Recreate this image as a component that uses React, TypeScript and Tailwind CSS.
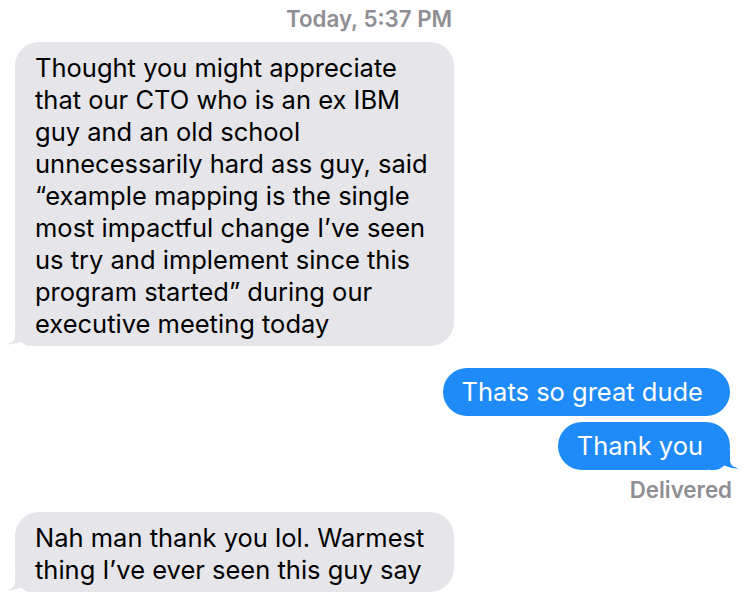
const font = { fontFamily: 'Inter, "Liberation Sans", sans-serif' };

const LeftTail = () => (
  <svg className="absolute -left-[10px] bottom-0" width="30" height="20" viewBox="0 0 30 20">
    <path d="M10 0 L10 10 C10 14 8 17 1 18.5 C6 18.8 10 17.6 16 15.5 C19 18.5 22 20 26 20 L30 20 L30 0 Z" fill="#e5e5ea" />
  </svg>
);

const RightTail = () => (
  <svg className="absolute -right-[10px] bottom-0" width="30" height="20" viewBox="0 0 30 20">
    <path d="M20 0 L20 10 C20 14 22 17 29 18.5 C24 18.8 20 17.6 14 15.5 C11 18.5 8 20 4 20 L0 20 L0 0 Z" fill="#1f8bf8" />
  </svg>
);

const Incoming = ({ lines }: { lines: string[] }) => (
  <div className="relative ml-[15px] w-[439px] rounded-[24px] bg-[#e5e5ea] pl-5 pr-4 pt-[10px] pb-[6px] text-[25.5px] leading-[32px] text-black">
    {lines.map((l, i) => (
      <div key={i} className="whitespace-nowrap">{l}</div>
    ))}
    <LeftTail />
  </div>
);

const Outgoing = ({ text, tail }: { text: string; tail?: boolean }) => (
  <div className="relative mr-[20px] self-end w-fit rounded-[24px] bg-[#1f8bf8] pl-[19px] pr-[27px] py-[8px] text-[25.5px] leading-[32px] whitespace-nowrap text-white">
    {text}
    {tail && <RightTail />}
  </div>
);

export default function App() {
  return (
    <div className="h-[608px] w-[750px] overflow-hidden bg-white" style={font}>
      <div className="flex flex-col pt-[7px]">
        <div className="pl-[286px] text-[22.3px] font-semibold leading-[24px] text-[#8e8e93]">Today, 5:37 PM</div>
        <div className="mt-[11px]">
          <Incoming
            lines={[
              'Thought you might appreciate',
              'that our CTO who is an ex IBM',
              'guy and an old school',
              'unnecessarily hard ass guy, said',
              '\u201Cexample mapping is the single',
              'most impactful change I\u2019ve seen',
              'us try and implement since this',
              'program started\u201D during our',
              'executive meeting today',
            ]}
          />
        </div>
        <div className="mt-[22px] flex flex-col gap-[6px]">
          <Outgoing text="Thats so great dude" />
          <Outgoing text="Thank you" tail />
        </div>
        <div className="mr-[18px] mt-[8px] self-end text-[22.3px] font-semibold leading-[24px] text-[#8e8e93]">Delivered</div>
        <div className="mt-[10px]">
          <Incoming lines={['Nah man thank you lol. Warmest', 'thing I\u2019ve ever seen this guy say']} />
        </div>
      </div>
    </div>
  );
}
